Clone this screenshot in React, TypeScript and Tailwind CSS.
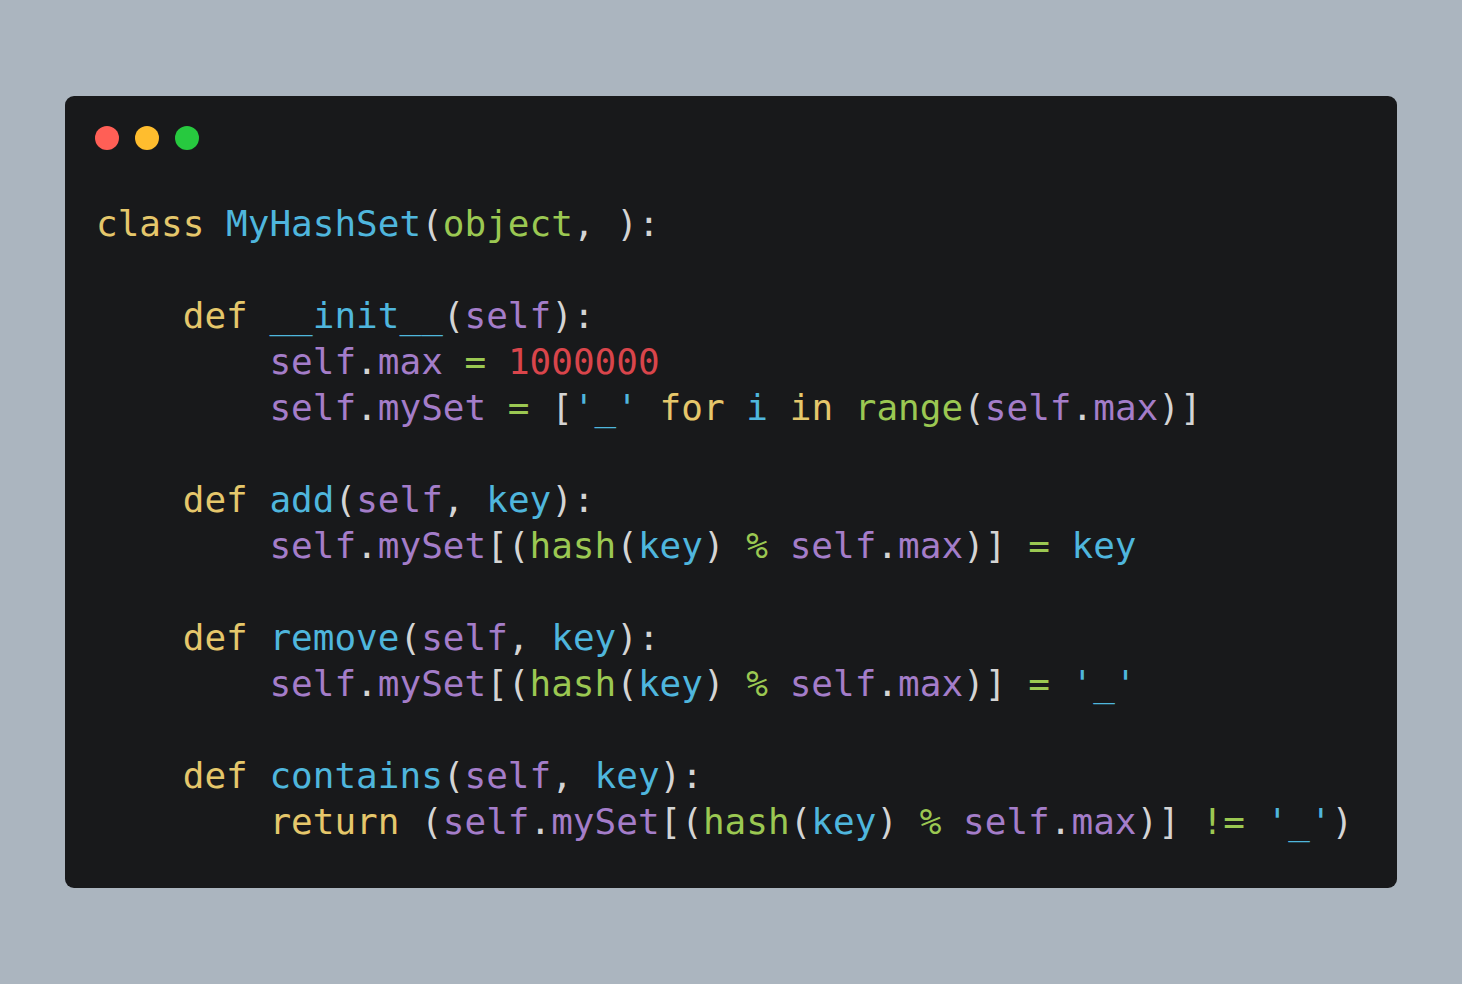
import React from "react";

type Tok = [string, string];

const Y = "text-[#e5c76b]";
const B = "text-[#4fb6dd]";
const P = "text-[#a47dc9]";
const G = "text-[#9bc852]";
const R = "text-[#d9454b]";
const W = "text-[#d4d4d4]";

const lines: Tok[][] = [
  [["class", Y], [" ", W], ["MyHashSet", B], ["(", W], ["object", G], [", ):", W]],
  [],
  [["    ", W], ["def", Y], [" ", W], ["__init__", B], ["(", W], ["self", P], ["):", W]],
  [["        ", W], ["self", P], [".", W], ["max", P], [" ", W], ["=", G], [" ", W], ["1000000", R]],
  [["        ", W], ["self", P], [".", W], ["mySet", P], [" ", W], ["=", G], [" [", W], ["'_'", B], [" ", W], ["for", Y], [" ", W], ["i", B], [" ", W], ["in", Y], [" ", W], ["range", G], ["(", W], ["self", P], [".", W], ["max", P], [")]", W]],
  [],
  [["    ", W], ["def", Y], [" ", W], ["add", B], ["(", W], ["self", P], [", ", W], ["key", B], ["):", W]],
  [["        ", W], ["self", P], [".", W], ["mySet", P], ["[(", W], ["hash", G], ["(", W], ["key", B], [") ", W], ["%", G], [" ", W], ["self", P], [".", W], ["max", P], [")] ", W], ["=", G], [" ", W], ["key", B]],
  [],
  [["    ", W], ["def", Y], [" ", W], ["remove", B], ["(", W], ["self", P], [", ", W], ["key", B], ["):", W]],
  [["        ", W], ["self", P], [".", W], ["mySet", P], ["[(", W], ["hash", G], ["(", W], ["key", B], [") ", W], ["%", G], [" ", W], ["self", P], [".", W], ["max", P], [")] ", W], ["=", G], [" ", W], ["'_'", B]],
  [],
  [["    ", W], ["def", Y], [" ", W], ["contains", B], ["(", W], ["self", P], [", ", W], ["key", B], ["):", W]],
  [["        ", W], ["return", Y], [" (", W], ["self", P], [".", W], ["mySet", P], ["[(", W], ["hash", G], ["(", W], ["key", B], [") ", W], ["%", G], [" ", W], ["self", P], [".", W], ["max", P], [")] ", W], ["!=", G], [" ", W], ["'_'", B], [")", W]],
];

export default function App() {
  return (
    <div className="w-[1462px] h-[984px] bg-[#abb5bf] pl-[65px] pt-[96px]">
      <div className="w-[1332px] h-[792px] bg-[#18191b] rounded-[9px] pl-[30px] pt-[30px]">
        <div className="flex gap-[16px] h-[24px]">
          <div className="w-[24px] h-[24px] rounded-full bg-[#ff5f56]" />
          <div className="w-[24px] h-[24px] rounded-full bg-[#ffbd2e]" />
          <div className="w-[24px] h-[24px] rounded-full bg-[#27c93f]" />
        </div>
        <pre
          className="mt-[51px] pl-[1px] text-[36px] leading-[46px] whitespace-pre"
          style={{ fontFamily: '"DejaVu Sans Mono", "Liberation Mono", monospace' }}
        >
          {lines.map((l, i) => (
            <div key={i} className="h-[46px]">
              {l.map((t, j) => (
                <span key={j} className={t[1]}>
                  {t[0]}
                </span>
              ))}
            </div>
          ))}
        </pre>
      </div>
    </div>
  );
}
